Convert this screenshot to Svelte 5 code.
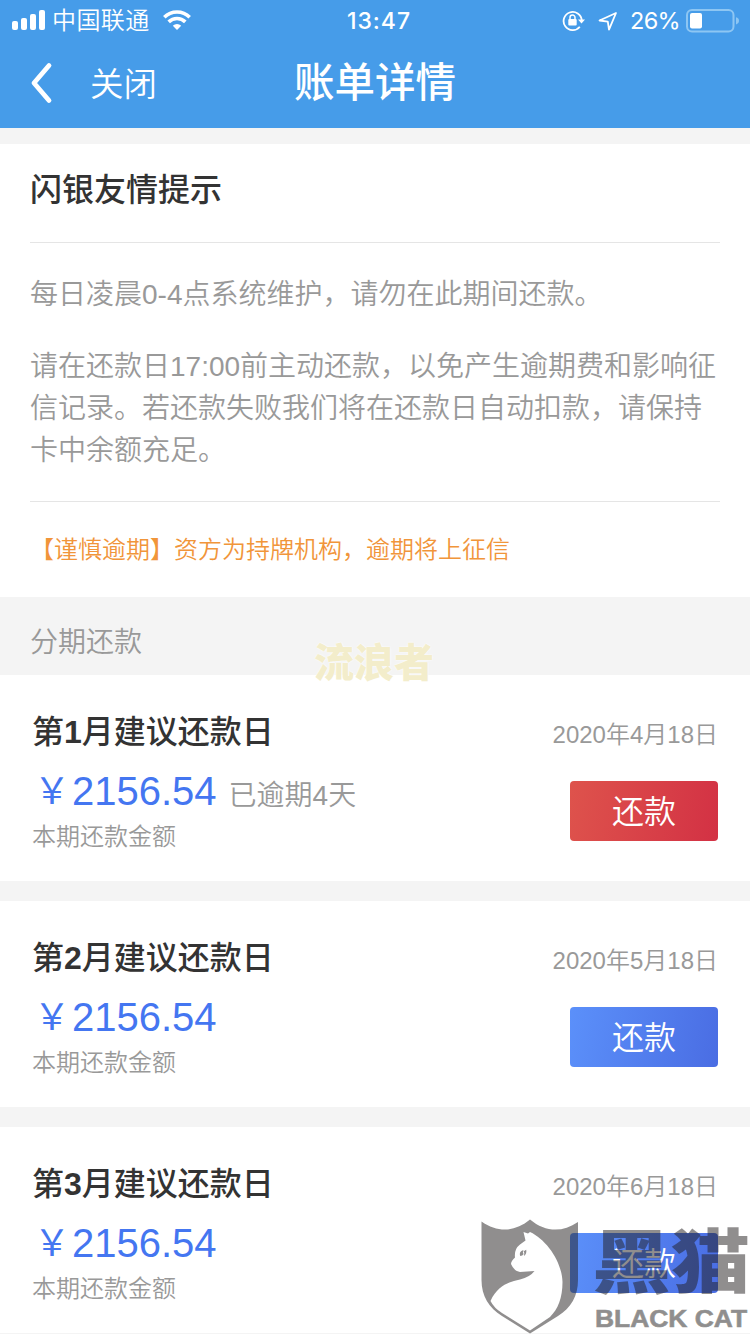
<script>
	const bills = [
		{ month: 1, date: '2020年4月18日', amount: '2156.54', overdue: 4 },
		{ month: 2, date: '2020年5月18日', amount: '2156.54', overdue: 0 },
		{ month: 3, date: '2020年6月18日', amount: '2156.54', overdue: 0 }
	]
</script>

<div class="page">
	<header>
		<div class="status">
			<div class="left">
				<svg class="signal" width="34" height="22" viewBox="0 0 34 22" fill="#fff">
					<rect x="0" y="12" width="6" height="9" rx="2" />
					<rect x="9" y="9" width="6" height="12" rx="2" />
					<rect x="18" y="5" width="6" height="16" rx="2" />
					<rect x="27" y="1" width="6" height="20" rx="2" />
				</svg>
				<span class="carrier">中国联通</span>
				<svg class="wifi" width="28" height="20" viewBox="0 0 28 20" fill="none" stroke="#fff" stroke-width="3.6">
					<path d="M1.3 7.2a18 18 0 0 1 25.4 0" />
					<path d="M5.7 11.9a11.8 11.8 0 0 1 16.6 0" />
					<path d="M14 20l-4.2-4.3a6 6 0 0 1 8.4 0z" fill="#fff" stroke="none" />
				</svg>
			</div>
			<span class="time">13:47</span>
			<div class="right">
				<svg width="24" height="22" viewBox="0 0 24 22" fill="none" stroke="#fff" stroke-width="1.8">
					<path d="M17.8 16.8a9.1 9.1 0 1 1 2-6.3" />
					<path d="M16 9.6h7l-3.5 4z" fill="#fff" stroke="none" />
					<rect x="6.3" y="9" width="8.4" height="6.6" rx="1" fill="#fff" stroke="none" />
					<path d="M8 9.5V7.6a2.5 2.5 0 0 1 5 0v1.9" stroke-width="1.5" />
				</svg>
				<svg class="arrow" width="20" height="20" viewBox="0 0 20 20" fill="none" stroke="#fff" stroke-width="1.8" stroke-linejoin="round">
					<path d="M18 2L1.5 9.5l8.3 1.1 1.2 8z" />
				</svg>
				<span class="percent">26%</span>
				<svg width="54" height="24" viewBox="0 0 54 24">
					<rect x="1" y="1" width="46.5" height="21.5" rx="5" fill="none" stroke="#8dc6f3" stroke-width="2" />
					<rect x="4" y="4" width="12" height="15.5" rx="2" fill="#fff" />
					<path d="M50 8.2q3 .8 3 3.6t-3 3.6z" fill="#8dc6f3" />
				</svg>
			</div>
		</div>
		<nav>
			<svg class="back" width="24" height="42" viewBox="0 0 24 42" fill="none" stroke="#fff" stroke-width="4.8" stroke-linecap="round" stroke-linejoin="round">
				<path d="M20 3.5L5 21 20 38.5" />
			</svg>
			<span class="close">关闭</span>
			<h1>账单详情</h1>
		</nav>
	</header>

	<section class="notice">
		<h2>闪银友情提示</h2>
		<div class="text">
			<p>每日凌晨0-4点系统维护，请勿在此期间还款。</p>
			<p>请在还款日17:00前主动还款，以免产生逾期费和影响征信记录。若还款失败我们将在还款日自动扣款，请保持卡中余额充足。</p>
		</div>
		<div class="warning">【谨慎逾期】资方为持牌机构，逾期将上征信</div>
	</section>

	<div class="label">
		分期还款
		<span class="user-mark">流浪者</span>
	</div>

	{#each bills as bill}
		<article>
			<div class="info">
				<h3>第<b>{bill.month}</b>月建议还款日</h3>
				<div class="amount">
					<b><i>￥</i>{bill.amount}</b>
					{#if bill.overdue}
						<span>已逾期{bill.overdue}天</span>
					{/if}
				</div>
				<div class="hint">本期还款金额</div>
			</div>
			<div class="action">
				<time>{bill.date}</time>
				<button class:overdue={bill.overdue}>还款</button>
			</div>
		</article>
	{/each}

	<div class="brand">
		<svg width="100" height="116" viewBox="0 0 100 116" fill="#231f20">
			<path
				fill-rule="evenodd"
				d="M1.5 3.5C18 15 35 14 50 1.5C65 14 82 15 98 4V62C98 78 91 90 78 98L50 115.5L22 98C9 90 1.5 78 1.5 62ZM43.5 14L48 15.5L50 14C67 22 82 44 82.5 64C82.5 80 78 91 70 99L50 112.5L22 95Q14 90 10.5 83C18 67 29 64 40 61.5Q50 59 54.5 53L40 54Q34 53 31 46Q31 43 35 39.5Q34 31 40 26.5L45.5 22.5Z"
			/>
			<path d="M40.2 38q-1.6-4.5 3.2-6q-1 3 .3 4q-1.2 2-3.5 2zM44 38q3-2.5 2.2-6.3l-2.5 1.5q1.4 2 .3 4.8z" />
		</svg>
		<div class="names">
			<span class="cn">黑猫</span>
			<span class="en">BLACK CAT</span>
		</div>
	</div>
</div>

<style>
	:global(body) {
		margin: 0;
		background: #f4f4f4;
	}
	.page {
		position: relative;
		width: 750px;
		height: 1334px;
		overflow: hidden;
		background: #f4f4f4;
		color: #999;
		font-family: 'Liberation Sans', 'Noto Sans CJK SC', sans-serif;
		font-weight: 350;
	}
	svg {
		display: block;
		flex: none;
	}
	h1, h2, h3, p {
		margin: 0;
	}

	header {
		height: 128px;
		background: #469ce9;
		color: #fff;
	}
	.status {
		display: grid;
		grid-template-columns: 1fr auto 1fr;
		align-items: center;
		height: 40px;
		padding: 0 10px 0 12px;
	}
	.left, .right {
		display: flex;
		align-items: center;
	}
	.right {
		justify-content: flex-end;
	}
	.signal, .wifi {
		margin-top: -2px;
	}
	.carrier {
		margin-left: 6px;
		font-size: 24px;
		line-height: 42px;
		letter-spacing: 0.4px;
	}
	.wifi {
		margin-left: 13px;
	}
	.time {
		padding-left: 6px;
		font: 500 23px/42px Inter, sans-serif;
		letter-spacing: 1px;
	}
	.arrow {
		margin-left: 12px;
	}
	.percent {
		margin: 0 6px 0 12px;
		font: 400 23.5px/42px Inter, sans-serif;
		letter-spacing: -0.7px;
	}
	nav {
		position: relative;
		display: flex;
		align-items: center;
		height: 86px;
		padding-left: 29px;
	}
	.close {
		margin-left: 37px;
		padding-top: 4px;
		font-size: 33.5px;
		line-height: 46px;
	}
	h1 {
		position: absolute;
		left: 0;
		right: 0;
		text-align: center;
		font-size: 40.5px;
		font-weight: 500;
		line-height: 86px;
		pointer-events: none;
	}

	.notice {
		margin-top: 16px;
		padding: 0 30px;
		height: 453px;
		background: #fff;
	}
	h2 {
		height: 98px;
		line-height: 92px;
		font-size: 32px;
		font-weight: 500;
		color: #333;
		border-bottom: 1px solid #e5e5e5;
	}
	.text {
		box-sizing: border-box;
		height: 259px;
		padding-top: 31px;
		font-size: 28px;
		line-height: 42px;
		border-bottom: 1px solid #e5e5e5;
	}
	.text p + p {
		margin-top: 30px;
	}
	.warning {
		font-size: 24px;
		line-height: 96px;
		color: #f1953a;
	}

	.label {
		position: relative;
		height: 78px;
		padding-left: 30px;
		font-size: 28px;
		line-height: 91px;
	}
	.user-mark {
		position: absolute;
		left: 314px;
		top: 37px;
		font-size: 40px;
		line-height: 58px;
		font-weight: 900;
		color: #f3edcb;
		text-shadow: 0 0 2px #fff, 0 0 1px #fff;
		z-index: 1;
	}

	article {
		display: flex;
		justify-content: space-between;
		box-sizing: border-box;
		height: 206px;
		padding: 33px 32px 0;
		background: #fff;
	}
	article + article {
		margin-top: 20px;
	}
	h3 {
		font-size: 32px;
		line-height: 49px;
		font-weight: 500;
		color: #333;
	}
	.amount {
		display: flex;
		align-items: baseline;
		gap: 12px;
		height: 62px;
		line-height: 69px;
		font-size: 28px;
	}
	.amount b {
		font-size: 40px;
		font-weight: 400;
		color: #4476f1;
	}
	.amount i {
		display: inline-block;
		width: 40px;
		text-align: center;
		font-size: 36px;
		line-height: 1;
		font-style: normal;
		vertical-align: 1px;
	}
	.hint {
		font-size: 24px;
		line-height: 36px;
	}
	.action {
		display: flex;
		flex-direction: column;
		align-items: flex-end;
	}
	time {
		font-size: 24px;
		line-height: 53px;
	}
	button {
		width: 148px;
		height: 60px;
		margin-top: 20px;
		padding: 2px 0 0;
		border: 0 none;
		border-radius: 4px;
		background: linear-gradient(100deg, #5b90fa, #4a6de3);
		color: #fff;
		font: inherit;
		font-size: 32px;
		line-height: 58px;
	}
	button.overdue {
		background: linear-gradient(100deg, #de534c, #d33144);
	}

	/* brand stamp floating over the last card */
	.brand {
		position: absolute;
		left: 480px;
		top: 1218px;
		display: flex;
		opacity: 0.5;
		color: #231f20;
	}
	.names {
		display: flex;
		flex-direction: column;
		margin-left: 15px;
	}
	.cn {
		height: 88px;
		margin-left: -3px;
		font-size: 70px;
		line-height: 93px;
		font-weight: 900;
		transform: scaleX(1.13);
		transform-origin: left;
		white-space: nowrap;
	}
	.en {
		font-size: 24px;
		line-height: 26px;
		font-weight: 700;
		-webkit-text-stroke: 0.6px #231f20;
		transform: scaleX(1.1);
		transform-origin: left;
		white-space: nowrap;
	}
</style>
